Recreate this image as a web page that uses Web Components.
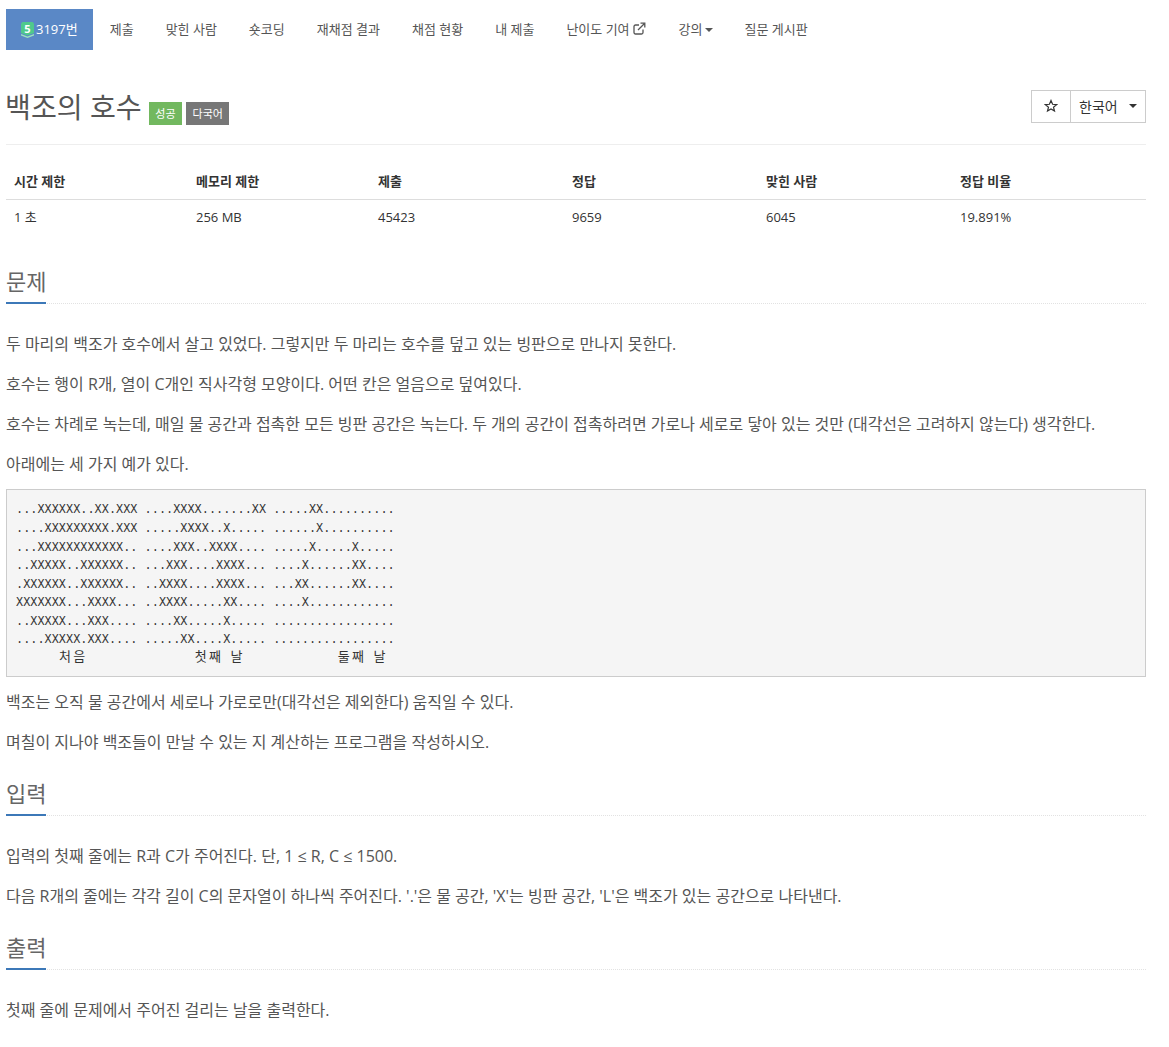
<!DOCTYPE html>
<html lang="ko">
<head>
<meta charset="utf-8">
<title>백조의 호수</title>
<style>
  html, body { margin: 0; background: #fff; }
  body {
    font-family: "Open Sans", "Noto Sans CJK KR", sans-serif;
    color: #555;
    font-size: 14px;
  }
  .page { width: 1140px; padding: 9px 0 0 6px; }
</style>
</head>
<body>
<div class="page">
  <boj-nav>
    <boj-tab active><boj-tier slot="icon"></boj-tier>3197번</boj-tab>
    <boj-tab>제출</boj-tab>
    <boj-tab>맞힌 사람</boj-tab>
    <boj-tab>숏코딩</boj-tab>
    <boj-tab>재채점 결과</boj-tab>
    <boj-tab>채점 현황</boj-tab>
    <boj-tab>내 제출</boj-tab>
    <boj-tab external>난이도 기여</boj-tab>
    <boj-tab caret>강의</boj-tab>
    <boj-tab>질문 게시판</boj-tab>
  </boj-nav>

  <boj-title>
    백조의 호수
    <boj-label slot="labels" color="#72b85f">성공</boj-label>
    <boj-label slot="labels" color="#777">다국어</boj-label>
    <boj-lang slot="actions"></boj-lang>
  </boj-title>

  <boj-stats></boj-stats>

  <boj-section heading="문제">
    <p>두 마리의 백조가 호수에서 살고 있었다. 그렇지만 두 마리는 호수를 덮고 있는 빙판으로 만나지 못한다.</p>
    <p>호수는 행이 R개, 열이 C개인 직사각형 모양이다. 어떤 칸은 얼음으로 덮여있다.</p>
    <p>호수는 차례로 녹는데, 매일 물 공간과 접촉한 모든 빙판 공간은 녹는다. 두 개의 공간이 접촉하려면 가로나 세로로 닿아 있는 것만 (대각선은 고려하지 않는다) 생각한다.</p>
    <p>아래에는 세 가지 예가 있다.</p>
    <boj-pre></boj-pre>
    <p>백조는 오직 물 공간에서 세로나 가로로만(대각선은 제외한다) 움직일 수 있다.</p>
    <p>며칠이 지나야 백조들이 만날 수 있는 지 계산하는 프로그램을 작성하시오.</p>
  </boj-section>

  <boj-section heading="입력">
    <p>입력의 첫째 줄에는 R과 C가 주어진다. 단, 1 ≤ R, C ≤ 1500.</p>
    <p>다음 R개의 줄에는 각각 길이 C의 문자열이 하나씩 주어진다. '.'은 물 공간, 'X'는 빙판 공간, 'L'은 백조가 있는 공간으로 나타낸다.</p>
  </boj-section>

  <boj-section heading="출력">
    <p>첫째 줄에 문제에서 주어진 걸리는 날을 출력한다.</p>
  </boj-section>
</div>

<script>
class BojNav extends HTMLElement {
  connectedCallback() {
    this.attachShadow({ mode: "open" });
    this.shadowRoot.innerHTML = `
      <style>
        :host { display: flex; height: 41px; }
      </style>
      <slot></slot>
    `;
  }
}

class BojTab extends HTMLElement {
  connectedCallback() {
    const external = this.hasAttribute("external");
    const caret = this.hasAttribute("caret");
    this.attachShadow({ mode: "open" });
    this.shadowRoot.innerHTML = `
      <style>
        :host {
          display: flex;
          align-items: center;
          padding: 0 16px 2px;
          font-size: 13px;
          color: #555;
          white-space: nowrap;
        }
        :host([active]) {
          background: #5a88c6;
          color: #fff;
          padding: 0 15px 2px;
          margin-right: 1px;
        }
        svg { display: block; margin-left: 3px; }
        .ext { margin-right: 1px; }
      </style>
      <slot name="icon"></slot><slot></slot>
      ${external ? `<svg class="ext" width="13" height="13" viewBox="0 0 13 13" fill="none" stroke="#555" stroke-width="1.3">
        <path d="M10 7.500v3a1.500 1.500 0 0 1-1.500 1.500h-6A1.500 1.500 0 0 1 1 10.500v-6A1.500 1.500 0 0 1 2.500 3H6"/>
        <path d="M5 8l6-6M7.500 1.200h4.300v4.300" />
      </svg>` : ""}
      ${caret ? `<svg width="8" height="4" viewBox="0 0 8 4" style="margin-left:2px;margin-top:2px"><path d="M0 0h8L4 4z" fill="#555"/></svg>` : ""}
    `;
  }
}

class BojTier extends HTMLElement {
  connectedCallback() {
    this.attachShadow({ mode: "open" });
    this.shadowRoot.innerHTML = `
      <style>
        :host { display: block; width: 13px; height: 16px; margin: 2px 2px 0 0; }
        svg { display: block; margin: 0; }
        text { font: 700 11px "Open Sans", sans-serif; fill: #fff; }
      </style>
      <svg width="13" height="16" viewBox="0 0 13 16">
        <path d="M0 1.500 1.500 0h10L13 1.500V11l-6.500 2.500L0 11z" fill="#4fc98c"/>
        <path d="M0 12l6.500 2.500L13 12v1.500L6.500 16 0 13.500z" fill="#9be3bd"/>
        <text x="6.500" y="10.500" text-anchor="middle">5</text>
      </svg>
    `;
  }
}

class BojLabel extends HTMLElement {
  connectedCallback() {
    this.attachShadow({ mode: "open" });
    this.shadowRoot.innerHTML = `
      <style>
        :host {
          display: block;
          height: 23px;
          line-height: 23px;
          padding: 0 6.500px;
          font-size: 11px;
          color: #fff;
          background: ${this.getAttribute("color")};
        }
      </style>
      <slot></slot>
    `;
  }
}

class BojLang extends HTMLElement {
  connectedCallback() {
    this.attachShadow({ mode: "open" });
    this.shadowRoot.innerHTML = `
      <style>
        :host {
          display: flex;
          height: 31px;
          border: 1px solid #ccc;
          font-size: 14px;
          color: #333;
        }
        .star { width: 38px; display: flex; align-items: center; justify-content: center; border-right: 1px solid #ccc; padding-bottom: 1px; box-sizing: content-box; height: 30px; }
        .select { width: 74px; display: flex; align-items: center; justify-content: space-between; padding: 0 8px 2px 8px; box-sizing: border-box; }
        svg { display: block; }
      </style>
      <div class="star">
        <svg width="14" height="14" viewBox="0 0 14 14"><path d="M7 1.500 8.600 5.300l4 .3-3.100 2.600 1 3.900L7 10l-3.500 2.100 1-3.900L1.400 5.600l4-.3z" fill="none" stroke="#333" stroke-width="1.200"/></svg>
      </div>
      <div class="select">
        <span>한국어</span>
        <svg width="8" height="4" viewBox="0 0 8 4"><path d="M0 0h8L4 4z" fill="#333"/></svg>
      </div>
    `;
  }
}

class BojTitle extends HTMLElement {
  connectedCallback() {
    this.attachShadow({ mode: "open" });
    this.shadowRoot.innerHTML = `
      <style>
        :host {
          display: flex;
          align-items: flex-start;
          margin-top: 31px;
          height: 63px;
          border-bottom: 1px solid #eee;
        }
        .name { font-size: 28.150px; line-height: 52px; color: #555; white-space: nowrap; margin-left: -1px; }
        .labels { display: flex; gap: 4px; margin: 21px 0 0 7px; }
        .actions { margin: 9px 0 0 auto; }
      </style>
      <div class="name"><slot></slot></div>
      <div class="labels"><slot name="labels"></slot></div>
      <div class="actions"><slot name="actions"></slot></div>
    `;
  }
}

const STAT_COLUMNS = [
  ["시간 제한", "1 초", 182],
  ["메모리 제한", "256 MB", 182],
  ["제출", "45423", 194],
  ["정답", "9659", 194],
  ["맞힌 사람", "6045", 194],
  ["정답 비율", "19.891%", 194],
];

class BojStats extends HTMLElement {
  connectedCallback() {
    this.attachShadow({ mode: "open" });
    this.shadowRoot.innerHTML = `
      <style>
        :host { display: block; margin: 19px 0 32px; }
        table { width: 100%; border-collapse: collapse; table-layout: fixed; font-size: 13px; color: #333; }
        th, td { padding: 8px; text-align: left; line-height: 18.500px; }
        th { font-weight: 700; border-bottom: 1px solid #ddd; }
      </style>
      <table>
        <colgroup>${STAT_COLUMNS.map(c => `<col style="width:${c[2]}px">`).join("")}</colgroup>
        <thead><tr>${STAT_COLUMNS.map(c => `<th>${c[0]}</th>`).join("")}</tr></thead>
        <tbody><tr>${STAT_COLUMNS.map(c => `<td>${c[1]}</td>`).join("")}</tr></tbody>
      </table>
    `;
  }
}

class BojSection extends HTMLElement {
  connectedCallback() {
    this.attachShadow({ mode: "open" });
    this.shadowRoot.innerHTML = `
      <style>
        :host { display: block; margin-top: 24px; }
        .heading {
          border-bottom: 1px dotted #e2e2e2;
          height: 37px;
          margin-bottom: 29px;
        }
        h2 {
          display: inline-block;
          margin: 0;
          height: 36px;
          line-height: 30px;
          font-size: 22px;
          font-weight: 400;
          color: #666;
          border-bottom: 2px solid #3c78b8;
          min-width: 40px;
        }
        ::slotted(p) { margin: 0 0 17.140px; font-size: 16px; line-height: 22.860px; color: #555; }
        ::slotted(boj-pre) { margin: -3.500px 0 14px; }
      </style>
      <div class="heading"><h2>${this.getAttribute("heading")}</h2></div>
      <slot></slot>
    `;
  }
}

const PRE_ROWS = [
  "...XXXXXX..XX.XXX ....XXXX.......XX .....XX..........",
  "....XXXXXXXXX.XXX .....XXXX..X..... ......X..........",
  "...XXXXXXXXXXXX.. ....XXX..XXXX.... .....X.....X.....",
  "..XXXXX..XXXXXX.. ...XXX....XXXX... ....X......XX....",
  ".XXXXXX..XXXXXX.. ..XXXX....XXXX... ...XX......XX....",
  "XXXXXXX...XXXX... ..XXXX.....XX.... ....X............",
  "..XXXXX...XXX.... ....XX.....X..... .................",
  "....XXXXX.XXX.... .....XX....X..... .................",
];

class BojPre extends HTMLElement {
  connectedCallback() {
    this.attachShadow({ mode: "open" });
    this.shadowRoot.innerHTML = `
      <style>
        :host {
          display: block;
          border: 1px solid #ccc;
          background: #f5f5f5;
          padding: 11px 9px 7px;
          height: 168px;
        }
        pre {
          margin: 0;
          font-family: "Liberation Mono", "Noto Sans CJK KR", monospace;
          font-size: 11.920px;
          line-height: 18.570px;
          color: #333;
        }
        b { font: 400 13px "Noto Sans CJK KR", sans-serif; letter-spacing: 2.340px; line-height: 0; vertical-align: 1.500px; }
      </style>
      <pre>${PRE_ROWS.join("\n")}
      <b>처음</b>               <b>첫째</b> <b>날</b>             <b>둘째</b> <b>날</b></pre>
    `;
  }
}

customElements.define("boj-nav", BojNav);
customElements.define("boj-tab", BojTab);
customElements.define("boj-tier", BojTier);
customElements.define("boj-label", BojLabel);
customElements.define("boj-lang", BojLang);
customElements.define("boj-title", BojTitle);
customElements.define("boj-stats", BojStats);
customElements.define("boj-section", BojSection);
customElements.define("boj-pre", BojPre);
</script>
</body>
</html>
